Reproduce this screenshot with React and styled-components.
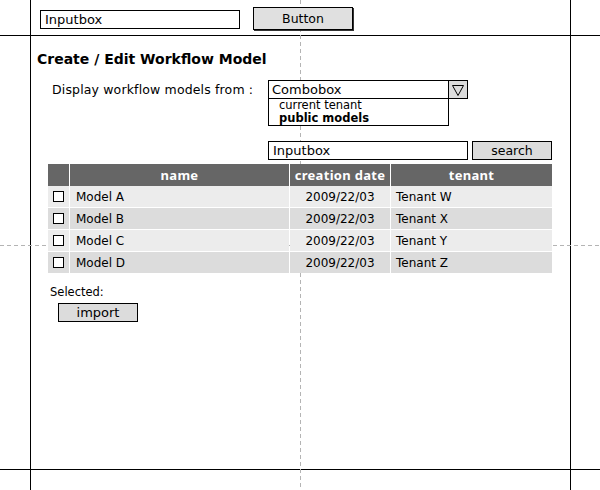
import React from 'react';
import styled, { createGlobalStyle } from 'styled-components';

const GlobalStyle = createGlobalStyle`
  html, body {
    margin: 0;
    padding: 0;
    background: #fff;
  }
  body {
    font-family: "DejaVu Sans", Verdana, sans-serif;
    color: #000;
  }
`;

const Canvas = styled.div`
  position: relative;
  width: 600px;
  height: 490px;
  overflow: hidden;
  background: #fff;
`;

// layout guides of the mockup canvas, drawn under the content
const Guide = styled.div`
  position: absolute;
  z-index: 0;
  ${({ $vertical, $at }) =>
    $vertical
      ? `left: ${$at}px; top: 0; bottom: 0; width: 1px;`
      : `top: ${$at}px; left: 0; right: 0; height: 1px;`}
  background: ${({ $dashed, $vertical }) =>
    $dashed
      ? `repeating-linear-gradient(${$vertical ? '180deg' : '90deg'}, #b4b4b4 0 4px, transparent 4px 7px)`
      : '#000'};
`;

const Content = styled.div`
  position: relative;
  z-index: 1;
  display: flex;
  flex-direction: column;
  padding-top: 6px;
`;

const TopBar = styled.div`
  display: flex;
  align-items: flex-start;
  gap: 13px;
  margin-left: 40px;
  height: 25px;
`;

const InputBox = styled.div`
  box-sizing: border-box;
  width: ${({ $width }) => $width}px;
  height: 19px;
  margin-top: ${({ $offset }) => $offset || 0}px;
  border: 1px solid #000;
  background: #fff;
  padding: 0 4px;
  font-size: 13px;
  line-height: 17px;
  white-space: nowrap;
`;

const RaisedButton = styled.div`
  box-sizing: border-box;
  width: 100px;
  height: 23px;
  margin-top: 1px;
  border: 1px solid #000;
  box-shadow: 1px 1px 0 #333;
  background: #e0e0e0;
  font-size: 12.5px;
  line-height: 21px;
  text-align: center;
`;

const Title = styled.h1`
  margin: 20px 0 0 37px;
  font-size: 14px;
  font-weight: bold;
  line-height: 17px;
  white-space: nowrap;
`;

const SourceRow = styled.div`
  display: flex;
  align-items: flex-start;
  margin-top: 12px;
  margin-left: 52px;
`;

const Label = styled.div`
  width: 216px;
  font-size: 12.5px;
  letter-spacing: 0.15px;
  line-height: 19px;
  white-space: nowrap;
`;

const ComboColumn = styled.div`
  display: flex;
  flex-direction: column;
`;

const ComboBox = styled.div`
  box-sizing: border-box;
  display: flex;
  width: 200px;
  height: 19px;
  border: 1px solid #000;
  background: #fff;
`;

const ComboText = styled.div`
  flex: 1;
  padding-left: 3px;
  font-size: 13px;
  line-height: 17px;
`;

const ComboArrow = styled.div`
  display: flex;
  align-items: center;
  justify-content: center;
  width: 18px;
  border-left: 1px solid #000;
  background: #dcdcdc;
`;

const DropList = styled.div`
  box-sizing: border-box;
  width: 181px;
  height: 28px;
  margin-top: -1px;
  padding: 0 0 0 10px;
  border: 1px solid #000;
  background: #fff;
`;

const DropItem = styled.div`
  font-size: 11.5px;
  line-height: 13px;
  font-weight: ${({ $bold }) => ($bold ? 'bold' : 'normal')};
  white-space: nowrap;
`;

const SearchRow = styled.div`
  display: flex;
  gap: 4px;
  margin-top: 15px;
  margin-left: 268px;
`;

const FlatButton = styled.div`
  box-sizing: border-box;
  width: ${({ $width }) => $width}px;
  height: 19px;
  border: 1px solid #000;
  background: #dcdcdc;
  font-size: ${({ $size }) => $size}px;
  line-height: 17px;
  text-align: center;
`;

const Table = styled.div`
  display: grid;
  grid-template-columns: 21px 219px 100px 161px;
  grid-auto-rows: 21px;
  gap: 1px;
  margin-top: 4px;
  margin-left: 48px;
  width: 504px;
`;

const HeadCell = styled.div`
  height: 22px;
  background: #666;
  color: #fff;
  font-family: "Noto Sans", "DejaVu Sans", sans-serif;
  font-weight: bold;
  font-size: 13px;
  letter-spacing: 0.3px;
  line-height: 22px;
  text-align: center;
  white-space: nowrap;
`;

const Cell = styled.div`
  display: flex;
  align-items: center;
  justify-content: ${({ $center }) => ($center ? 'center' : 'flex-start')};
  padding-left: ${({ $pad }) => $pad || 0}px;
  background: ${({ $shade }) => ($shade ? '#dcdcdc' : '#ececec')};
  font-size: 12px;
  white-space: nowrap;
`;

const CheckBox = styled.span`
  box-sizing: border-box;
  display: block;
  width: 11px;
  height: 11px;
  border: 1px solid #000;
  background: #fff;
`;

const SelectedLabel = styled.div`
  margin-top: 12px;
  margin-left: 50px;
  font-size: 11.5px;
  line-height: 14px;
`;

const ImportRow = styled.div`
  margin-top: 4px;
  margin-left: 58px;
`;

const rows = [
  { name: 'Model A', date: '2009/22/03', tenant: 'Tenant W' },
  { name: 'Model B', date: '2009/22/03', tenant: 'Tenant X' },
  { name: 'Model C', date: '2009/22/03', tenant: 'Tenant Y' },
  { name: 'Model D', date: '2009/22/03', tenant: 'Tenant Z' },
];

export default function App() {
  return (
    <>
      <GlobalStyle />
      <Canvas>
        <Guide $vertical $at={30} />
        <Guide $vertical $at={570} />
        <Guide $at={35} />
        <Guide $at={469} />
        <Guide $vertical $dashed $at={300} />
        <Guide $dashed $at={245} />

        <Content>
          <TopBar>
            <InputBox $width={200} $offset={4}>Inputbox</InputBox>
            <RaisedButton>Button</RaisedButton>
          </TopBar>

          <Title>Create / Edit Workflow Model</Title>

          <SourceRow>
            <Label>Display workflow models from :</Label>
            <ComboColumn>
              <ComboBox>
                <ComboText>Combobox</ComboText>
                <ComboArrow>
                  <svg width="14" height="14" viewBox="0 0 14 14">
                    <path d="M1.5 2.5 H12.5 L7 12.5 Z" fill="none" stroke="#000" strokeWidth="1" />
                  </svg>
                </ComboArrow>
              </ComboBox>
              <DropList>
                <DropItem>current tenant</DropItem>
                <DropItem $bold>public models</DropItem>
              </DropList>
            </ComboColumn>
          </SourceRow>

          <SearchRow>
            <InputBox $width={200}>Inputbox</InputBox>
            <FlatButton $width={80} $size={12.5}>search</FlatButton>
          </SearchRow>

          <Table>
            <HeadCell />
            <HeadCell>name</HeadCell>
            <HeadCell>creation date</HeadCell>
            <HeadCell>tenant</HeadCell>
            {rows.map((row, i) => (
              <React.Fragment key={row.name}>
                <Cell $center $shade={i % 2 === 1}>
                  <CheckBox />
                </Cell>
                <Cell $pad={6} $shade={i % 2 === 1}>{row.name}</Cell>
                <Cell $center $shade={i % 2 === 1}>{row.date}</Cell>
                <Cell $pad={5} $shade={i % 2 === 1}>{row.tenant}</Cell>
              </React.Fragment>
            ))}
          </Table>

          <SelectedLabel>Selected:</SelectedLabel>
          <ImportRow>
            <FlatButton $width={80} $size={13}>import</FlatButton>
          </ImportRow>
        </Content>
      </Canvas>
    </>
  );
}
